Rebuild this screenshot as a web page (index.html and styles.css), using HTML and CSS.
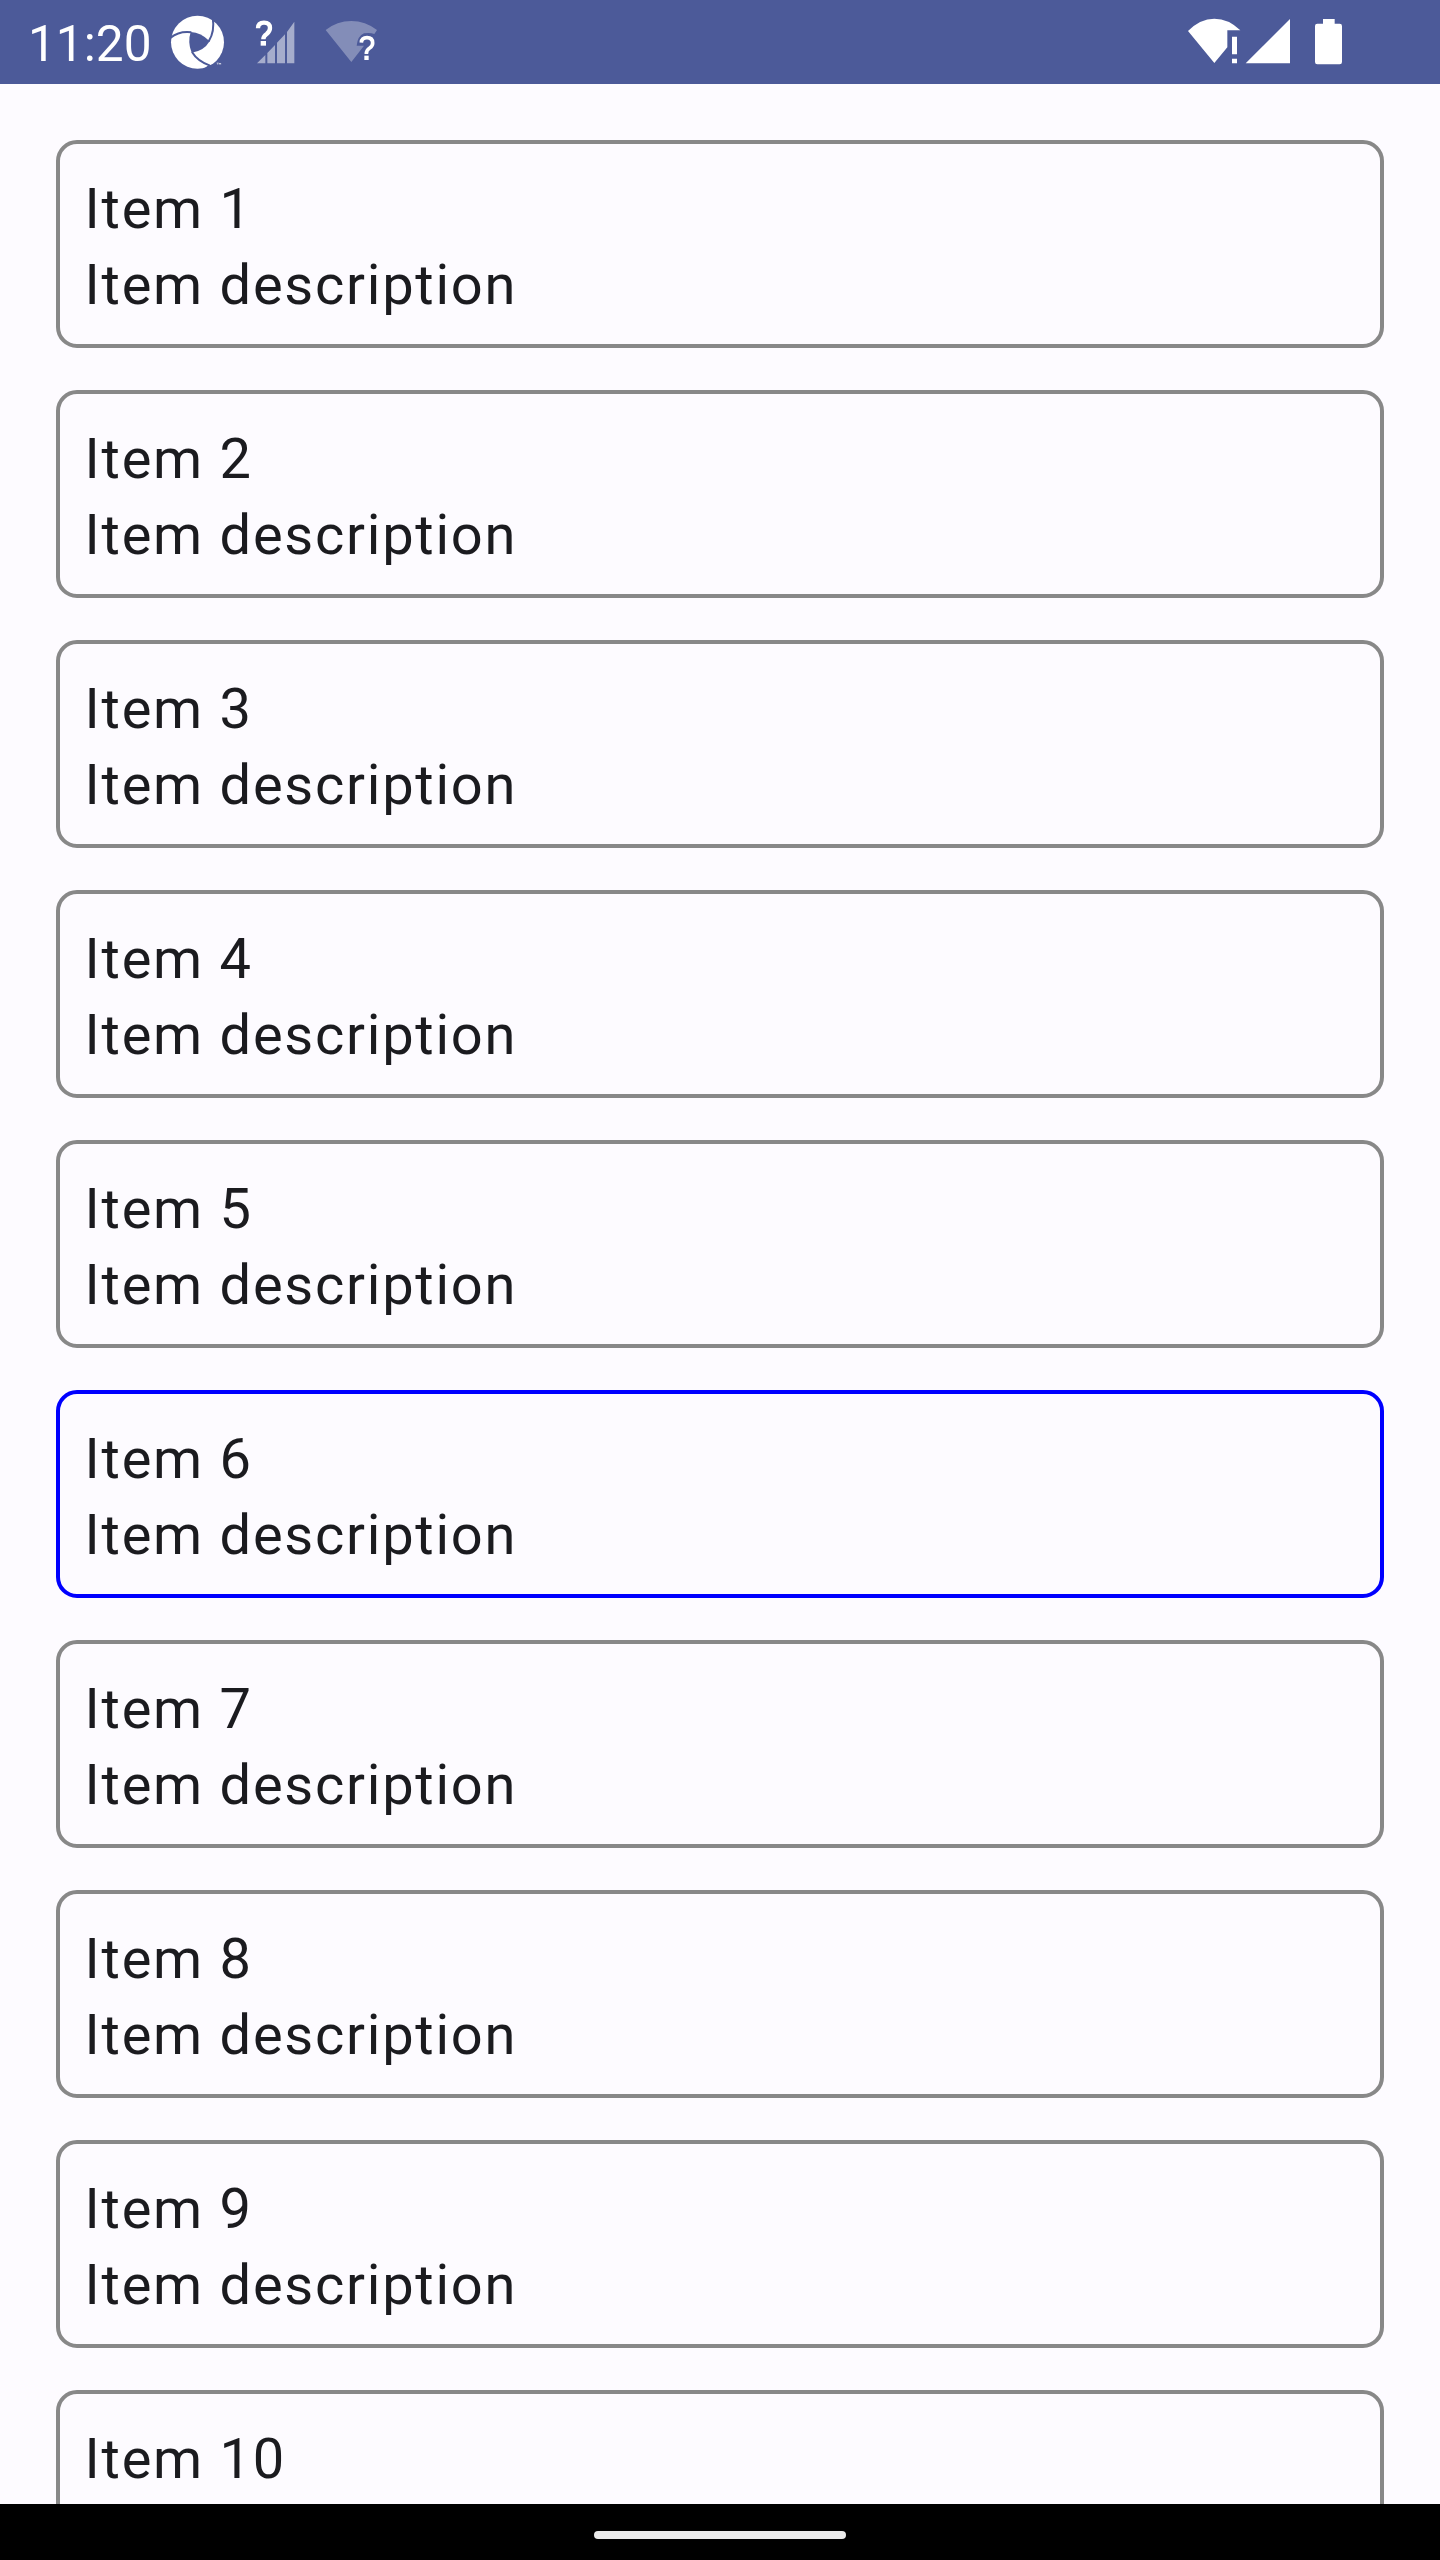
FILE: index.html
```html
<!DOCTYPE html>
<html lang="en">
<head>
<meta charset="utf-8">
<title>Items</title>
<link rel="stylesheet" href="styles.css">
</head>
<body>
<div class="screen">
  <header class="status-bar">
    <span class="clock">11:20</span>
    <svg class="icon-app" width="56" height="56" viewBox="510 43 168 168">
      <circle cx="592.5" cy="127.500" r="79.500" fill="#fff"/>
      <path class="cut" d="M572 97Q603 98 629 125Q611 155 575 159Q562 128 572 97Z"/>
      <g class="cut-line">
        <path d="M511 115Q538 93 574 98"/>
        <path d="M626 125Q645 96 638 52"/>
        <path d="M576 157Q592 184 630 198"/>
      </g>
      <path class="cut" d="M612 207L622 199L642 193L646 198L622 212Z"/>
      <path d="M650 190h6M653 190v5M658 195v-5l2 3l2-3v5" fill="none" stroke="#fff" stroke-width="1.500"/>
    </svg>
    <svg class="icon-sim" width="40" height="46" viewBox="75 58 120 138">
      <path d="M81 191L106 166V191ZM112 160L135 136V191H112ZM141 129L165 104V191H141ZM171 97L193 66V191H171Z" fill="#fff" fill-opacity=".5"/>
      <path d="M84 86Q84 69 102 69Q120 69 120 85Q120 95 110 103Q100 110 100 119" fill="none" stroke="#fff" stroke-width="13"/>
      <path d="M92 124h16v14H92Z" fill="#fff"/>
    </svg>
    <svg class="icon-wifi-unknown" width="52" height="46" viewBox="285 58 156 138">
      <path d="M287 91Q321 64 364 64Q406 64 441 91L433 103Q420 98 402 101Q383 109 380 138H402L364 187Z" fill="#fff" fill-opacity=".31"/>
      <path d="M394 129Q395 114 411 114Q428 114 428 130Q428 139 419 145Q409 151 409 163" fill="none" stroke="#fff" stroke-width="11"/>
      <path d="M403 168h13v13H403Z" fill="#fff"/>
    </svg>
    <svg class="icon-system" width="156" height="48" viewBox="81 55 468 144">
      <g fill="#fff">
        <path d="M84 94Q120 57 163 57Q206 57 241 92H202V143L163 190Z"/>
        <path d="M216 111h15v53h-15ZM216 177h15v14h-15Z"/>
        <path d="M257 191L390 58V191Z"/>
        <path d="M489 58h35v14h15q7 0 7 7v108q0 7-7 7H472q-7 0-7-7V79q0-7 7-7h17Z"/>
      </g>
    </svg>
  </header>
  <main class="list">
    <article class="card"><p>Item 1</p><p>Item description</p></article>
    <article class="card"><p>Item 2</p><p>Item description</p></article>
    <article class="card"><p>Item 3</p><p>Item description</p></article>
    <article class="card"><p>Item 4</p><p>Item description</p></article>
    <article class="card"><p>Item 5</p><p>Item description</p></article>
    <article class="card card-selected"><p>Item 6</p><p>Item description</p></article>
    <article class="card"><p>Item 7</p><p>Item description</p></article>
    <article class="card"><p>Item 8</p><p>Item description</p></article>
    <article class="card"><p>Item 9</p><p>Item description</p></article>
    <article class="card"><p>Item 10</p></article>
  </main>
  <footer class="nav-bar"><div class="handle"></div></footer>
</div>
</body>
</html>
```
FILE: styles.css
```css
* { box-sizing: border-box; }
body { margin: 0; font-family: Roboto, sans-serif; }
p { margin: 0; }

.screen {
  display: flex;
  flex-direction: column;
  width: 1440px;
  height: 2560px;
  overflow: hidden;
  background: #fdfbff;
  color: #1b1b1f;
}

.status-bar {
  display: flex;
  flex: none;
  align-items: flex-start;
  height: 84px;
  padding: 0 97px 0 28px;
  background: #4c5a99;
  color: #fff;
}
.clock {
  width: 142px;
  font-size: 49.6px;
  line-height: 88px;
  white-space: nowrap;
}
.icon-app { margin-top: 14px; }
.cut { fill: #4c5a99; }
.cut-line { fill: none; stroke: #4c5a99; stroke-width: 6; }
.icon-sim { margin: 19px 0 0 29px; }
.icon-wifi-unknown { margin: 19px 0 0 30px; }
.icon-system { margin: 18px 0 0 auto; }

.list {
  display: flex;
  flex: 1;
  flex-direction: column;
  gap: 42px;
  min-height: 0;
  padding: 56px 56px 0;
  overflow: hidden;
}
.card {
  flex: none;
  height: 208px;
  padding: 27px 24.6px;
  border: 4px solid #888;
  border-radius: 21px;
  font-size: 56px;
  line-height: 76px;
  letter-spacing: 1.75px;
}
.card-selected { border-color: #00f; }

.nav-bar {
  display: flex;
  flex: none;
  justify-content: center;
  height: 56px;
  padding-top: 27px;
  background: #000;
}
.handle {
  width: 252px;
  height: 8px;
  border-radius: 4px;
  background: #ebebeb;
}
```
